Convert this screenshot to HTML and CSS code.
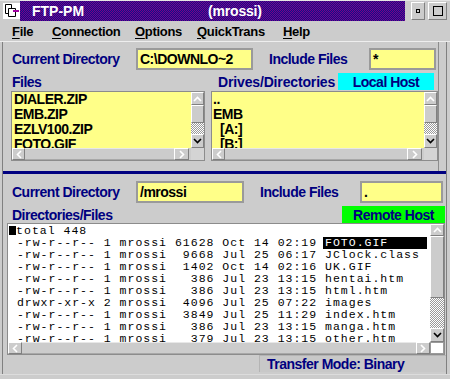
FILE: index.html
```html
<!DOCTYPE html>
<html>
<head>
<meta charset="utf-8">
<title>FTP-PM</title>
<link rel="stylesheet" href="styles.css">
</head>
<body>
<div class="window">
  <div class="titlebar">
    <div class="sysicon">
      <svg width="17" height="16" viewBox="0 0 17 16">
        <rect x="0" y="0" width="17" height="16" fill="#ffffff"/>
        <path d="M2.5 1.5 V10.5 M2.5 1.5 H8.5 V5.5 M5.5 5.5 H12.5 V13.5 H5.5 Z M2.5 10.5 H5.5" stroke="#000" stroke-width="1" fill="none"/>
        <rect x="10" y="7" width="6" height="2" fill="#a000a0"/>
      </svg>
    </div>
    <div class="title"><span class="app">FTP-PM</span><span class="user">(mrossi)</span></div>
    <div class="tbtn tmin"><i></i></div>
    <div class="tbtn tmax"><i></i></div>
  </div>

  <div class="menubar">
    <span class="mi m1"><u>F</u>ile</span>
    <span class="mi m2"><u>C</u>onnection</span>
    <span class="mi m3"><u>O</u>ptions</span>
    <span class="mi m4"><u>Q</u>uickTrans</span>
    <span class="mi m5"><u>H</u>elp</span>
  </div>

  <div class="client">
    <section class="local">
      <div class="row dirrow">
        <span class="lbl lbl-cd">Current Directory</span>
        <div class="field f-ldir">C:\DOWNLO~2</div>
        <span class="lbl lbl-inc">Include Files</span>
        <div class="field f-linc">*</div>
      </div>
      <div class="row headrow">
        <span class="lbl lh-files">Files</span>
        <span class="lbl lh-drives">Drives/Directories</span>
        <span class="host host-local">Local Host</span>
      </div>
      <div class="lists">
        <div class="listbox lb-files">
          <div class="lb-items">
            <div class="it">DIALER.ZIP</div>
            <div class="it">EMB.ZIP</div>
            <div class="it">EZLV100.ZIP</div>
            <div class="it">FOTO.GIF</div>
          </div>
          <div class="vscroll vs-small">
            <div class="sb-btn"><svg width="9" height="6" viewBox="0 0 9 6"><path d="M1 5 L4.5 1.5 L8 5" stroke="#ffffff" stroke-width="1.6" fill="none"/></svg></div>
            <div class="sb-thumb"></div>
            <div class="sb-track"></div>
            <div class="sb-btn sb-last"><svg width="9" height="6" viewBox="0 0 9 6"><path d="M1 1 L4.5 4.5 L8 1" stroke="#000000" stroke-width="1.6" fill="none"/></svg></div>
          </div>
          <div class="hscroll">
            <div class="sb-btn hb-l"><svg width="6" height="9" viewBox="0 0 6 9"><path d="M5 1 L1.5 4.5 L5 8" stroke="#ffffff" stroke-width="1.6" fill="none"/></svg></div>
            <div class="sb-hthumb"></div>
            <div class="sb-btn hb-r"><svg width="6" height="9" viewBox="0 0 6 9"><path d="M1 1 L4.5 4.5 L1 8" stroke="#ffffff" stroke-width="1.6" fill="none"/></svg></div>
          </div>
          <div class="sb-corner"></div>
        </div>

        <div class="listbox lb-drives">
          <div class="lb-items">
            <div class="it">..</div>
            <div class="it">EMB</div>
            <div class="it ind">[A:]</div>
            <div class="it ind">[B:]</div>
          </div>
          <div class="vscroll vs-small">
            <div class="sb-btn"><svg width="9" height="6" viewBox="0 0 9 6"><path d="M1 5 L4.5 1.5 L8 5" stroke="#ffffff" stroke-width="1.6" fill="none"/></svg></div>
            <div class="sb-thumb"></div>
            <div class="sb-track"></div>
            <div class="sb-btn sb-last"><svg width="9" height="6" viewBox="0 0 9 6"><path d="M1 1 L4.5 4.5 L8 1" stroke="#000000" stroke-width="1.6" fill="none"/></svg></div>
          </div>
          <div class="hscroll">
            <div class="sb-btn hb-l"><svg width="6" height="9" viewBox="0 0 6 9"><path d="M5 1 L1.5 4.5 L5 8" stroke="#ffffff" stroke-width="1.6" fill="none"/></svg></div>
            <div class="sb-hthumb"></div>
            <div class="sb-btn hb-r"><svg width="6" height="9" viewBox="0 0 6 9"><path d="M1 1 L4.5 4.5 L1 8" stroke="#ffffff" stroke-width="1.6" fill="none"/></svg></div>
          </div>
          <div class="sb-corner"></div>
        </div>
      </div>
    </section>

    <div class="divider"></div>

    <section class="remote">
      <div class="row dirrow2">
        <span class="lbl lbl-cd">Current Directory</span>
        <div class="field f-rdir">/mrossi</div>
        <span class="lbl lbl-inc">Include Files</span>
        <div class="field f-rinc">.</div>
      </div>
      <div class="row headrow">
        <span class="lbl lh-dirs">Directories/Files</span>
        <span class="host host-remote">Remote Host</span>
      </div>
      <div class="listing">
        <div class="ls-text">
          <div class="ln"><span class="cur"></span>total 448</div>
          <div class="ln"> -rw-r--r-- 1 mrossi 61628 Oct 14 02:19 <span class="sel">FOTO.GIF</span></div>
          <div class="ln"> -rw-r--r-- 1 mrossi  9668 Jul 25 06:17 JClock.class</div>
          <div class="ln"> -rw-r--r-- 1 mrossi  1402 Oct 14 02:16 UK.GIF</div>
          <div class="ln"> -rw-r--r-- 1 mrossi   386 Jul 23 13:15 hentai.htm</div>
          <div class="ln"> -rw-r--r-- 1 mrossi   386 Jul 23 13:15 html.htm</div>
          <div class="ln"> drwxr-xr-x 2 mrossi  4096 Jul 25 07:22 images</div>
          <div class="ln"> -rw-r--r-- 1 mrossi  3849 Jul 25 11:29 index.htm</div>
          <div class="ln"> -rw-r--r-- 1 mrossi   386 Jul 23 13:15 manga.htm</div>
          <div class="ln"> -rw-r--r-- 1 mrossi   379 Jul 23 13:15 other.htm</div>
        </div>
        <div class="vscroll vs-big">
          <div class="sb-btn"><svg width="9" height="6" viewBox="0 0 9 6"><path d="M1 5 L4.5 1.5 L8 5" stroke="#ffffff" stroke-width="1.6" fill="none"/></svg></div>
          <div class="sb-thumb"></div>
          <div class="sb-track"></div>
          <div class="sb-btn sb-last"><svg width="9" height="6" viewBox="0 0 9 6"><path d="M1 1 L4.5 4.5 L8 1" stroke="#000000" stroke-width="1.6" fill="none"/></svg></div>
        </div>
        <div class="hscroll">
          <div class="sb-btn hb-l2"><svg width="6" height="9" viewBox="0 0 6 9"><path d="M5 1 L1.5 4.5 L5 8" stroke="#ffffff" stroke-width="1.6" fill="none"/></svg></div>
          <div class="sb-hthumb"></div>
          <div class="sb-btn hb-r2"><svg width="6" height="9" viewBox="0 0 6 9"><path d="M1 1 L4.5 4.5 L1 8" stroke="#ffffff" stroke-width="1.6" fill="none"/></svg></div>
        </div>
        <div class="sb-corner white"></div>
      </div>
      <div class="statusrow">
        <div class="status">Transfer Mode: Binary</div>
      </div>
    </section>
  </div>
  <div class="bottomframe"></div>
</div>
</body>
</html>
```

FILE: styles.css
```css
* { box-sizing: border-box; }

body {
  margin: 0;
  background: #cccccc;
}

.window {
  width: 450px;
  height: 379px;
  background: #cccccc;
  display: flex;
  flex-direction: column;
  overflow: hidden;
  font-family: "Liberation Sans", Arial, sans-serif;
}

/* ---------- title bar ---------- */
.titlebar {
  height: 21px;
  border-top: 1px solid #e4e4e4;
  display: flex;
  align-items: stretch;
  flex: none;
}

.sysicon {
  width: 17px;
  margin-left: 3px;
  display: flex;
  align-items: center;
}

.sysicon svg { display: block; }

.title {
  width: 385px;
  background-color: #400088;
  background-image: repeating-conic-gradient(#7a0088 0 25%, #10108a 0 50%);
  background-size: 2px 2px;
  color: #ffffff;
  font-weight: bold;
  font-size: 14px;
  display: flex;
  align-items: center;
}

.app { margin-left: 12px; }
.user { margin-left: 124px; letter-spacing: -0.2px; }

.tbtn {
  background: #cccccc;
  border-top: 1px solid #ffffff;
  border-left: 1px solid #ffffff;
  border-right: 1px solid #808080;
  border-bottom: 1px solid #808080;
  display: flex;
  align-items: center;
  justify-content: center;
  margin-top: 1px;
  margin-bottom: 1px;
}

.tmin { width: 14px; margin-left: 6px; }
.tmin i { width: 4px; height: 4px; border: 1px solid #000; display: block; }
.tmax { width: 19px; margin-left: 3px; }
.tmax i { width: 10px; height: 10px; border: 1px solid #000; display: block; }

/* ---------- menu ---------- */
.menubar {
  height: 21px;
  flex: none;
  display: flex;
  align-items: center;
  padding-left: 12px;
  border-bottom: 1px solid #eeeeee;
  font-weight: bold;
  font-size: 13px;
  letter-spacing: -0.3px;
  color: #000000;
}

.menubar u { text-underline-offset: 2px; }

.mi { white-space: nowrap; }
.m1 { width: 40px; }
.m2 { width: 83px; }
.m3 { width: 62px; }
.m4 { width: 86px; }

/* ---------- client ---------- */
.client {
  margin-left: 2px;
  margin-right: 3px;
  border-left: 1px solid #808080;
  border-right: 1px solid #808080;
  height: 332px;
  display: flex;
  flex-direction: column;
  flex: none;
}

.local {
  width: 436px;
  border-right: 1px solid #8c8c8c;
  padding-bottom: 10px;
}

.row {
  display: flex;
  align-items: center;
  padding-left: 9px;
}

.dirrow { height: 22px; margin-top: 6px; }
.dirrow2 { height: 22px; margin-top: 7px; }
.headrow { height: 17px; margin-top: 3px; }

.lbl {
  color: #000080;
  font-weight: bold;
  font-size: 14px;
  letter-spacing: -0.5px;
  white-space: nowrap;
}

.lbl-cd { width: 124px; }
.lbl-inc { width: 100px; margin-left: 16px; }

.lh-files { width: 206px; }
.lh-drives { width: 120px; letter-spacing: -0.15px; }
.lh-dirs { width: 330px; }

.field {
  height: 22px;
  border: 2px solid #9a9a9a;
  background: #ffff88;
  color: #000000;
  font-weight: bold;
  font-size: 14px;
  letter-spacing: -0.5px;
  padding-left: 2px;
  display: flex;
  align-items: center;
  white-space: nowrap;
  overflow: hidden;
}

.f-ldir { width: 117px; }
.f-linc { width: 67px; }
.f-rdir { width: 108px; }
.f-rinc { width: 83px; }

.host {
  height: 17px;
  color: #000080;
  font-weight: bold;
  font-size: 14px;
  letter-spacing: -0.5px;
  display: flex;
  align-items: center;
  justify-content: center;
}

.host-local { width: 96px; background: #00ffff; }
.host-remote { width: 103px; background: #00ff00; }

/* ---------- list boxes ---------- */
.lists {
  display: flex;
  margin-top: 1px;
  padding-left: 8px;
}

.listbox {
  height: 70px;
  border: 1px solid #8c8c8c;
  display: grid;
  grid-template-rows: 56px 12px;
}

.lb-files { width: 194px; grid-template-columns: 179px 13px; }
.lb-drives { width: 227px; margin-left: 6px; grid-template-columns: 212px 13px; }

.lb-items {
  background: #ffff88;
  overflow: hidden;
  font-weight: bold;
  font-size: 14px;
  letter-spacing: -0.5px;
  line-height: 15px;
  color: #000000;
  white-space: nowrap;
}

.lb-files .lb-items { padding-left: 2px; }
.lb-drives .lb-items { padding-left: 1px; }
.it.ind { padding-left: 7px; }

/* ---------- scroll bars ---------- */
.vscroll {
  display: flex;
  flex-direction: column;
  background: #cccccc;
}

.sb-btn {
  background: #cccccc;
  border-top: 1px solid #ffffff;
  border-left: 1px solid #ffffff;
  border-right: 1px solid #808080;
  border-bottom: 1px solid #808080;
  display: flex;
  align-items: center;
  justify-content: center;
  flex: none;
}

.sb-btn svg { display: block; }

.sb-thumb {
  background: #cccccc;
  border-top: 1px solid #ffffff;
  border-left: 1px solid #ffffff;
  border-right: 1px solid #808080;
  border-bottom: 1px solid #808080;
  flex: none;
}

.sb-track {
  background-color: #ffffff;
  background-image: repeating-conic-gradient(#9a9a9a 0 25%, #ffffff 0 50%);
  background-size: 2px 2px;
  flex: none;
}

.vs-small .sb-btn { height: 13px; }
.vs-small .sb-last { height: 14px; }
.vs-small .sb-thumb { height: 18px; }
.vs-small .sb-track { height: 11px; }

.vs-big .sb-btn { height: 12px; }
.vs-big .sb-last { height: 14px; }
.vs-big .sb-thumb { height: 62px; }
.vs-big .sb-track { height: 30px; }

.hscroll {
  display: flex;
  background: #cccccc;
}

.sb-hthumb {
  flex: 1;
  background: #cccccc;
  border-top: 1px solid #e8e8e8;
  border-bottom: 1px solid #a8a8a8;
}

.hb-l { width: 13px; }
.hb-r { width: 15px; margin-right: 2px; }
.hb-l2 { width: 14px; }
.hb-r2 { width: 14px; }

.sb-corner { background: #d4d4d4; }
.sb-corner.white { background: #ffffff; border: 1px solid #9a9a9a; }

/* ---------- divider ---------- */
.divider {
  height: 3px;
  background: #000080;
  flex: none;
}

/* ---------- remote ---------- */
.remote {
  display: flex;
  flex-direction: column;
}

.listing {
  margin-left: 4px;
  width: 438px;
  height: 132px;
  border: 1px solid #8c8c8c;
  display: grid;
  grid-template-columns: 422px 14px;
  grid-template-rows: 118px 12px;
  background: #ffffff;
}

.ls-text {
  background: #ffffff;
  overflow: hidden;
  padding-left: 1px;
  padding-top: 1px;
  font-family: "Liberation Mono", "Courier New", monospace;
  font-size: 11.5px;
  letter-spacing: 1px;
  line-height: 12px;
  color: #000000;
}

.ln {
  height: 12px;
  white-space: pre;
}

.cur {
  display: inline-block;
  width: 7px;
  height: 9px;
  margin-right: 0.1px;
  background: #000000;
  vertical-align: -1px;
}

.sel {
  display: inline-block;
  width: 104px;
  margin-left: -2px;
  padding-left: 2px;
  background: #000000;
  color: #ffffff;
}

.statusrow {
  display: flex;
  justify-content: flex-end;
}

.status {
  width: 187px;
  height: 17px;
  background: #c8c8c8;
  border-top: 1px solid #b4b4b4;
  border-left: 1px solid #b4b4b4;
  color: #000080;
  font-weight: bold;
  font-size: 14px;
  letter-spacing: -0.5px;
  padding-left: 7px;
  display: flex;
  align-items: center;
  white-space: nowrap;
}

.bottomframe {
  flex: 1;
  border-top: 1px solid #dcdcdc;
}
```
